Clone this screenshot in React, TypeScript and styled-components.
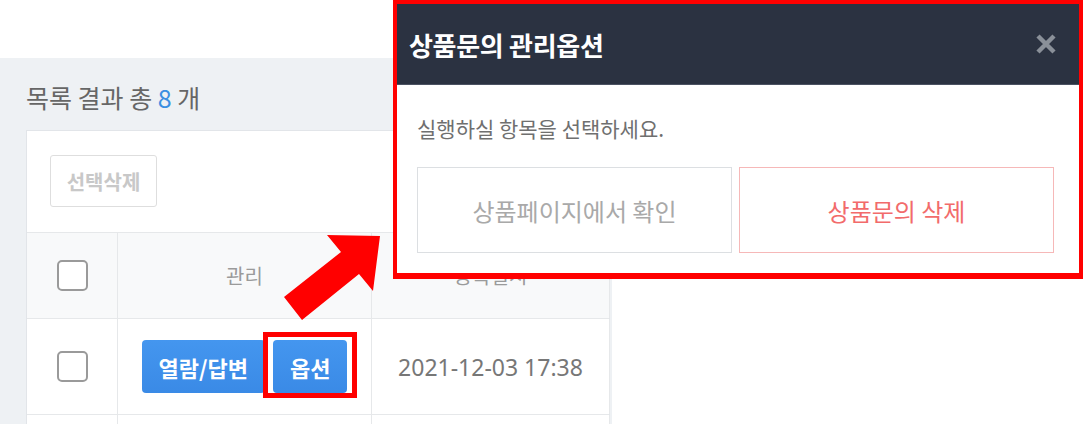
import styled, { createGlobalStyle } from "styled-components";

const GlobalStyle = createGlobalStyle`
  html, body {
    margin: 0;
    padding: 0;
    background: #ffffff;
  }
  * {
    box-sizing: border-box;
  }
  body {
    font-family: "Noto Sans CJK KR", "Noto Sans", sans-serif;
  }
`;

const Page = styled.div`
  position: relative;
  width: 1084px;
  height: 424px;
  overflow: hidden;
  background: #ffffff;
`;

const ListPanel = styled.section`
  margin-top: 58px;
  width: 612px;
  height: 366px;
  background: #eef1f4;
  padding-left: 26px;
  display: flex;
  flex-direction: column;
  overflow: hidden;
`;

const ResultTitle = styled.h2`
  margin: 0;
  flex: none;
  height: 72px;
  display: flex;
  align-items: center;
  padding-top: 6px;
  font-size: 25px;
  font-weight: 400;
  color: #666;
  white-space: pre;
`;

const Count = styled.span`
  color: #3b8fe2;
`;

const Card = styled.div`
  flex: 1;
  min-height: 0;
  width: 584px;
  background: #ffffff;
  border: 1px solid #e2e5e9;
  border-bottom: none;
`;

const Toolbar = styled.div`
  height: 101px;
  padding: 24px 23px 0;
`;

const GhostButton = styled.button`
  width: 107px;
  height: 52px;
  border: 1px solid #dedede;
  border-radius: 3px;
  background: #ffffff;
  color: #c8c8c8;
  font-family: inherit;
  font-size: 20px;
  font-weight: 700;
  padding: 0;
`;

const Row = styled.div<{ $head?: boolean }>`
  display: grid;
  grid-template-columns: 91px 254px 238px;
  height: ${(p) => (p.$head ? "86px" : "96px")};
  background: ${(p) => (p.$head ? "#f8f9fa" : "#ffffff")};
  border-top: 1px solid #e6e8ea;
`;

const Cell = styled.div`
  display: flex;
  align-items: center;
  justify-content: center;
  gap: 8px;
  border-right: 1px solid #e6e8ea;
`;

const HeadText = styled.span`
  font-size: 20px;
  color: #9a9a9a;
`;

const DateText = styled.span`
  font-family: "Noto Sans", "Noto Sans CJK KR", sans-serif;
  font-size: 23px;
  color: #777;
`;

const Checkbox = styled.span`
  width: 31px;
  height: 31px;
  border: 2px solid #9a9a9a;
  border-radius: 5px;
  background: #ffffff;
`;

const BlueButton = styled.button<{ $marked?: boolean }>`
  position: relative;
  height: 53px;
  padding: 0 17px;
  border: none;
  border-radius: 4px;
  background: linear-gradient(#4496ef, #3a8ae6);
  color: #ffffff;
  font-family: inherit;
  font-size: 22px;
  font-weight: 700;
  white-space: nowrap;

  &::after {
    content: "";
    display: ${(p) => (p.$marked ? "block" : "none")};
    position: absolute;
    top: -8px;
    bottom: -5px;
    left: -10px;
    right: -10px;
    border: 5px solid #ff0000;
  }
`;

const Arrow = styled.svg`
  position: absolute;
  left: 278px;
  top: 228px;
  pointer-events: none;
`;

const Modal = styled.div`
  position: absolute;
  left: 393px;
  top: 0;
  width: 690px;
  height: 279px;
  border: 4px solid #ff0000;
  border-bottom-width: 6px;
  background: #ffffff;
  display: flex;
  flex-direction: column;
`;

const ModalHeader = styled.div`
  height: 81px;
  flex: none;
  background: #2b3241;
  border-bottom: 1px solid #4b5262;
  display: flex;
  align-items: center;
  justify-content: space-between;
  padding: 0 22px 0 12px;
`;

const ModalTitle = styled.h3`
  margin: 0;
  font-size: 26px;
  font-weight: 700;
  color: #ffffff;
  letter-spacing: -0.3px;
`;

const CloseButton = styled.button`
  width: 22px;
  height: 22px;
  padding: 0;
  border: none;
  background: none;
  display: flex;
`;

const ModalBody = styled.div`
  padding: 28px 25px 0 20px;
`;

const Guide = styled.p`
  margin: 0;
  height: 30px;
  line-height: 30px;
  font-size: 21px;
  color: #6f6f6f;
`;

const Actions = styled.div`
  margin-top: 24px;
  display: flex;
  gap: 7px;
`;

const ActionButton = styled.button<{ $danger?: boolean }>`
  flex: 1;
  height: 86px;
  background: #ffffff;
  border: 1px solid ${(p) => (p.$danger ? "#f6b8b8" : "#dcdfe2")};
  color: ${(p) => (p.$danger ? "#f26b6b" : "#a9a9a9")};
  font-family: inherit;
  font-size: 24px;
  font-weight: 400;
`;

export default function App() {
  return (
    <Page>
      <GlobalStyle />
      <ListPanel>
        <ResultTitle>
          목록 결과 총 <Count>8</Count> 개
        </ResultTitle>
        <Card>
          <Toolbar>
            <GhostButton>선택삭제</GhostButton>
          </Toolbar>
          <Row $head>
            <Cell>
              <Checkbox />
            </Cell>
            <Cell>
              <HeadText>관리</HeadText>
            </Cell>
            <Cell>
              <HeadText>등록일시</HeadText>
            </Cell>
          </Row>
          <Row>
            <Cell>
              <Checkbox />
            </Cell>
            <Cell>
              <BlueButton>열람/답변</BlueButton>
              <BlueButton $marked>옵션</BlueButton>
            </Cell>
            <Cell>
              <DateText>2021-12-03 17:38</DateText>
            </Cell>
          </Row>
          {/* 다음 행은 화면 밖으로 잘림 */}
          <Row>
            <Cell />
            <Cell />
            <Cell />
          </Row>
        </Card>
      </ListPanel>

      {/* 안내용 화살표 */}
      <Arrow width="106" height="96" viewBox="278 228 106 96">
        <polygon
          points="380,236 327,235 341,252 284,297 302,320 359,274 373,291"
          fill="#ff0000"
        />
      </Arrow>

      <Modal>
        <ModalHeader>
          <ModalTitle>상품문의 관리옵션</ModalTitle>
          <CloseButton aria-label="닫기">
            <svg width="22" height="22" viewBox="0 0 22 22">
              <path
                d="M3 3 L19 19 M19 3 L3 19"
                stroke="#8a9099"
                strokeWidth="4.5"
              />
            </svg>
          </CloseButton>
        </ModalHeader>
        <ModalBody>
          <Guide>실행하실 항목을 선택하세요.</Guide>
          <Actions>
            <ActionButton>상품페이지에서 확인</ActionButton>
            <ActionButton $danger>상품문의 삭제</ActionButton>
          </Actions>
        </ModalBody>
      </Modal>
    </Page>
  );
}
